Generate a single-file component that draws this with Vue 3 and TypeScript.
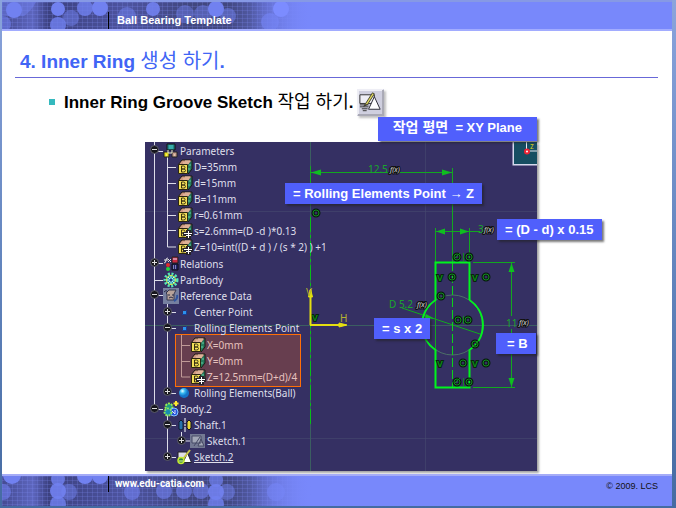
<script setup lang="ts">
interface Row {
  text: string
  icon: string
  level: number
  active?: boolean
}

const parameters: Row[] = [
  { text: 'Parameters', icon: 'params', level: 1 },
  { text: 'D=35mm', icon: 'value', level: 2 },
  { text: 'd=15mm', icon: 'value', level: 2 },
  { text: 'B=11mm', icon: 'value', level: 2 },
  { text: 'r=0.61mm', icon: 'value', level: 2 },
  { text: 's=2.6mm=(D -d )*0.13', icon: 'formula', level: 2 },
  { text: 'Z=10=int((D + d ) / (s * 2) ) +1', icon: 'formula', level: 2 },
]
const geometry: Row[] = [
  { text: 'Relations', icon: 'relations', level: 1 },
  { text: 'PartBody', icon: 'gear', level: 1 },
  { text: 'Reference Data', icon: 'refdata', level: 1 },
  { text: 'Center Point', icon: 'point', level: 2 },
  { text: 'Rolling Elements Point', icon: 'point', level: 2 },
]
const coordinates: Row[] = [
  { text: 'X=0mm', icon: 'value', level: 3 },
  { text: 'Y=0mm', icon: 'value', level: 3 },
  { text: 'Z=12.5mm=(D+d)/4', icon: 'formula', level: 3 },
]
const bodies: Row[] = [
  { text: 'Rolling Elements(Ball)', icon: 'ball', level: 2 },
  { text: 'Body.2', icon: 'body', level: 1 },
  { text: 'Shaft.1', icon: 'shaft', level: 2 },
  { text: 'Sketch.1', icon: 'hidden-sketch', level: 3 },
  { text: 'Sketch.2', icon: 'sketch', level: 2, active: true },
]
const groups = [
  { name: 'parameters', rows: parameters },
  { name: 'geometry', rows: geometry },
  { name: 'coordinates', rows: coordinates },
  { name: 'bodies', rows: bodies },
]

const toggles = [
  { x: 154, y: 149, open: true },
  { x: 154, y: 262, open: false },
  { x: 154, y: 294, open: true },
  { x: 167, y: 311, open: false },
  { x: 167, y: 327, open: true },
  { x: 167, y: 391, open: false },
  { x: 154, y: 408, open: true },
  { x: 167, y: 424, open: true },
  { x: 181, y: 440, open: false },
  { x: 167, y: 456, open: false },
]

const rings = [
  [316, 213], [452, 277], [486, 277], [441, 296], [458, 320], [468, 320],
  [475, 344], [463, 363], [486, 363], [457, 257], [469, 257], [457, 382], [469, 382],
]
const verticals = [[437, 281], [472, 281], [437, 367], [472, 367]]
const formulas = [[390, 172], [484, 232], [417, 307], [519, 325]]
</script>

<template>
  <div class="page">
    <svg class="defs" width="0" height="0" aria-hidden="true">
      <defs>
        <pattern id="mesh" width="5" height="4" patternUnits="userSpaceOnUse">
          <path d="M0 .5H5M.5 0V4" stroke="#7f8cf5" stroke-opacity=".22" />
        </pattern>
        <linearGradient id="fade">
          <stop offset="0" stop-color="#454b91" />
          <stop offset=".1" stop-color="#5d66be" />
          <stop offset=".15" stop-color="#3c4180" />
          <stop offset=".4" stop-color="#4d54a0" />
          <stop offset=".6" stop-color="#41477f" />
          <stop offset=".8" stop-color="#41477f" />
          <stop offset=".88" stop-color="#5b64bc" />
          <stop offset="1" stop-color="#7888fb" />
        </linearGradient>
        <linearGradient id="dissolve">
          <stop offset="0" stop-color="#7888fb" stop-opacity="0" />
          <stop offset="1" stop-color="#7888fb" />
        </linearGradient>
        <radialGradient id="sphere" cx=".35" cy=".3">
          <stop offset="0" stop-color="#e8ffff" />
          <stop offset=".5" stop-color="#35b8f0" />
          <stop offset="1" stop-color="#1474c8" />
        </radialGradient>
      </defs>
      <symbol id="i-params" viewBox="0 0 16 16">
        <path d="M4 1h8v6H4z" fill="#22888a" stroke="#111" />
        <path d="M6 3h4M6 5h4" stroke="#50d0c8" />
        <path d="M1 9h5v5H1z" fill="#e8e020" stroke="#222" />
        <path d="M9 9h5v5H9z" fill="#c8a090" stroke="#222" />
        <path d="M5 7v3h4V7M3 12h1M11 12h1" fill="none" stroke="#f0f0d0" />
      </symbol>
      <symbol id="i-value" viewBox="0 0 16 16">
        <path d="M1 6 5 1h10l-4 5z" fill="#d09a80" />
        <path d="M11 6l4-5v9l-4 5z" fill="#267c5e" />
        <path d="M1 6 5 1h10v9l-4 5" fill="none" stroke="#1a1814" />
        <path d="M6 4h6M8 2h5" stroke="#ecc7ae" />
        <path d="M13 5v2M12 9v2" stroke="#62c9a0" />
        <path d="M1.500 5.500h9v9h-9z" fill="#f3df58" stroke="#2b2610" />
        <path d="M4.500 7v6h2q2 0 2-1.500t-2-1.500h-2 2q1.500 0 1.500-1.500t-1.500-1.500z" fill="none" stroke="#3a3212" />
      </symbol>
      <symbol id="i-formula" viewBox="0 0 16 16">
        <use href="#i-value" />
        <path d="M6 9h3V7h5v2h2v4h-2v3H9v-3H6z" fill="#25222a" />
        <path d="M7 10.500h8M9 12.500h5M11.500 8v7" stroke="#fff" />
      </symbol>
      <symbol id="i-relations" viewBox="0 0 16 16">
        <path d="M1 7q2 0 2-3 0-2 2-2M1 4h4M5 6l3-3M5 3l3 3" fill="none" stroke="#ddd" />
        <circle cx="5" cy="9" r="2" fill="#e22a2a" />
        <circle cx="5" cy="13" r="2" fill="#22d040" />
        <path d="M9 1h6v6H9z" fill="#c82840" stroke="#222" />
        <path d="M9 8h6v6H9z" fill="#20226a" stroke="#111" />
        <path d="M10 3h4M10 10h1M12 10h1M10 12h1M12 12h1" stroke="#e0e0ff" />
      </symbol>
      <symbol id="i-gear" viewBox="0 0 16 16">
        <circle cx="8" cy="8" r="6" fill="none" stroke="#55e6b9" stroke-width="3" stroke-dasharray="2 1.500" />
        <circle cx="8" cy="8" r="4.500" fill="#209aae" stroke="#d8f044" />
        <path d="M8 4v8M4 8h8M5 5l6 6M11 5l-6 6" stroke="#b7f9ef" />
        <circle cx="8" cy="8" r="1.500" fill="#213a8b" />
      </symbol>
      <symbol id="i-refdata" viewBox="0 0 16 16">
        <path d="M0 0h16v16H0z" fill="#7680a0" />
        <path d="M3 5 6 2h7l-2 4v6H4V6z" fill="#b7a39a" stroke="#343850" />
        <path d="M5 7h2M9 7h2M6 10q2-2 4 0M1 4q2-3 4 0" fill="none" stroke="#262a45" />
        <path d="M11 13q4-2 3-6" fill="none" stroke="#3054a0" stroke-width="2" />
      </symbol>
      <symbol id="i-point" viewBox="0 0 16 16">
        <path d="M6 7h3v3H6z" fill="#2c91ed" />
        <path d="M9.500 6v4.500H5" fill="none" stroke="#183f98" />
      </symbol>
      <symbol id="i-ball" viewBox="0 0 16 16">
        <circle cx="7" cy="8" r="5" fill="url(#sphere)" />
      </symbol>
      <symbol id="i-body" viewBox="0 0 16 16">
        <circle cx="6" cy="6" r="3.500" fill="#1d9a88" stroke="#98ed4f" stroke-width="2" stroke-dasharray="2 1" />
        <circle cx="11" cy="11" r="4" fill="#2050d8" stroke="#87c8ff" />
        <circle cx="5" cy="11" r="3.500" fill="#1a8db0" stroke="#8be65a" stroke-width="2" stroke-dasharray="2 1" />
        <path d="M13 0v5M10.500 2.500h5" stroke="#ffea30" stroke-width="2" />
        <path d="M9 10l3 3M12 9v4" stroke="#ddf" />
      </symbol>
      <symbol id="i-shaft" viewBox="0 0 16 16">
        <path d="M2 5l2-2 2 2v7l-2 1-2-1z" fill="#2672ad" stroke="#0f1c30" />
        <path d="M10 5l2-2 2 2v6l-2 2-2-2z" fill="#e8d838" stroke="#15151f" />
        <path d="M8 1v14" stroke="#fff" stroke-dasharray="5 1 2 1" />
      </symbol>
      <symbol id="i-hidden-sketch" viewBox="0 0 16 16">
        <path d="M0 1h15v14H0z" fill="#737993" />
        <path d="M2 3h9v7H2zM8 13l3-7 3 7zM4 13 10 4" fill="#a2a7b7" stroke="#464a66" />
      </symbol>
      <symbol id="i-sketch" viewBox="0 0 16 16">
        <path d="M1 3h9v7H1z" fill="#dedee8" stroke="#222" />
        <path d="M6 13.500 10.500 4l4 9.500z" fill="#fff" stroke="#202030" />
        <path d="M6 10 13 1" stroke="#c9c848" stroke-width="2" />
        <circle cx="4" cy="11.500" r="3" fill="#31803a" stroke="#c4ec31" stroke-width="1.500" />
        <path d="M2 12h4" stroke="#e9ff91" />
      </symbol>
    </svg>

    <header class="band top">
      <svg class="pattern" viewBox="0 0 310 28" preserveAspectRatio="xMinYMin slice" aria-hidden="true">
        <path d="M0 0h310v28H0z" fill="url(#fade)" />
        <path d="M0 0h310v28H0z" fill="url(#mesh)" />
        <g fill="#7181f0">
          <path d="M0 0h34q-4 8-12 14H0z" opacity=".5" />
          <circle cx="12" cy="8" r="8" /><circle cx="1" cy="22" r="8" opacity=".6" />
          <circle cx="56" cy="7" r="7" /><circle cx="56" cy="23" r="8" opacity=".8" />
          <circle cx="69" cy="16" r="8" opacity=".5" /><circle cx="83" cy="6" r="8" opacity=".8" />
          <circle cx="98" cy="6" r="8" /><circle cx="125" cy="14" r="9" opacity=".5" />
          <circle cx="151" cy="7" r="7" opacity=".9" /><circle cx="183" cy="12" r="9" opacity=".45" />
          <circle cx="201" cy="12" r="9" opacity=".45" /><circle cx="214" cy="7" r="8" />
          <circle cx="226" cy="14" r="8" opacity=".5" /><circle cx="268" cy="20" r="9" opacity=".6" />
        </g>
        <path d="M225 0h85v28h-85z" fill="url(#dissolve)" />
        <circle cx="279" cy="7" r="8" fill="#7c8cff" />
      </svg>
      <span class="band-text">Ball Bearing Template</span>
    </header>

    <main>
      <h1>4. Inner Ring <span>생성 하기</span>.</h1>
      <h2>
        <i class="bullet"></i>
        <span>Inner Ring Groove Sketch <span class="ko">작업 하기</span>.</span>
        <svg class="tool" viewBox="0 0 28 28" aria-hidden="true">
          <path d="M0 0h28v28H0z" fill="#cfcfdf" />
          <path d="M1 27V1h26" fill="none" stroke="#eeeef5" stroke-width="2" />
          <path d="M27 1v26H1" fill="none" stroke="#a9a9b5" stroke-width="2" />
          <path d="M3 6h15v9H3z" fill="#eeeef5" stroke="#333" />
          <path d="M18 8l6 13H12z" fill="#fff" stroke="#2c2c35" />
          <path d="M9 15 16 4l2 1-7 11-4 2z" fill="#e0d85b" stroke="#444432" />
          <path d="M3 16.500h9M3 18.500h9M5 20.500h6M6 22.500h4" stroke="#333" />
        </svg>
      </h2>

      <section class="model">
        <svg class="canvas" viewBox="145 142 392 329">
          <g fill="none" stroke="#464970">
            <path d="M425.500 142V471M145 211.500H537M145 438.500H537" opacity=".6" />
            <path d="M310.500 142V471M145 325.500H537" stroke="#3b5e61" />
          </g>
          <g class="links">
            <path d="M154.500 142V409M154 151.500h9M154 263.500h9M154 280.500h9M154 295.500h9M154 409.500h9" />
            <path d="M167.500 157V247H176M168 167.500h8M168 183.500h8M168 199.500h8M168 215.500h8M168 230.500h8" />
            <path d="M167.500 302V393M168 312.500h8M168 328.500h8M168 393.500h8M181.500 334V377H190M181 345.500h9M181 361.500h9" />
            <path d="M167.500 415V457M168 425.500h8M168 457.500h8M181.500 432v9h9" />
          </g>
          <g v-for="t in toggles" :key="`${t.x}-${t.y}`">
            <circle :cx="t.x + 0.5" :cy="t.y + 0.5" r="4" fill="#16161c" stroke="#5d5d6c" />
            <path :d="`M${t.x - 2} ${t.y + 0.5}h5`" stroke="#ddd" />
            <path v-if="!t.open" :d="`M${t.x + 0.5} ${t.y - 2}v5`" stroke="#ddd" />
          </g>

          <g fill="none" stroke="#12a820">
            <path d="M310.500 166V205M310.500 172.500H452.500M452.500 168V262" />
            <path d="M310.500 217V425" stroke-dasharray="15 3 3 3" stroke="#08be18" />
            <path d="M435.500 228V262M469.500 228V262M435 231.500H480M473 262.500H515M473 387.500H515M511.500 262V316M511.500 329V387" />
            <path d="M435.500 301V349M402 308 480 334" />
            <circle cx="452.500" cy="325" r="30" stroke="#4c6f67" />
            <path d="M452.500 262V387" stroke-dasharray="9 3" stroke="#0bd41a" />
            <path d="M469.500 300V262.500H435.500V300A30 30 0 0 0 435.500 350V387.500H469.500V350A30 30 0 0 0 469.500 300" stroke="#00f51d" stroke-width="2" />
          </g>
          <g fill="#0fbe20">
            <path d="M311 172.500l10-3v6zM452 172.500l-10-3v6zM436 231.500l9-3v6zM469 231.500l-9-3v6zM511.500 263l-3 9h6zM511.500 387l-3-9h6zM435 319l-9-5-1 4z" />
          </g>
          <g class="dims">
            <text x="368" y="173">12.5</text>
            <text x="478" y="233">3</text>
            <text x="389" y="308">D 5.2</text>
            <text x="506" y="327">11</text>
          </g>
          <g fill="none" stroke="#071b0d" stroke-width="3">
            <circle v-for="r in rings" :key="r.join()" :cx="r[0]" :cy="r[1]" r="3" />
          </g>
          <g fill="none" stroke="#138b20">
            <circle v-for="r in rings" :key="r.join()" :cx="r[0]" :cy="r[1]" r="3" />
            <path d="M463.500 253v8M463.500 316v8M463.500 378v8M454 259l6-6M454 384l6-6M472 347l6-6" />
          </g>
          <g class="marks">
            <text v-for="v in verticals" :key="v.join()" :x="v[0]" :y="v[1]">V</text>
            <text x="312" y="321">V</text>
          </g>
          <g class="fx">
            <text v-for="f in formulas" :key="f.join()" :x="f[0]" :y="f[1]">f(x)</text>
          </g>
          <g stroke="#e4df10" fill="#e4df10">
            <path d="M310.500 290V325M310 325H346" stroke-width="2" />
            <path d="M310.500 289l-2 8h4zM347 325l-8-2v4z" />
          </g>
          <g class="axis">
            <text x="306" y="296">V</text>
            <text x="340" y="322">H</text>
          </g>
          <path d="M513.500 142V164.500H537" fill="none" stroke="#d6d8ed" stroke-width="2" />
          <path d="M514 142h23v22h-23z" fill="#164e62" />
          <path d="M526.500 142v9H537" fill="none" stroke="#e8e8f2" />
          <circle cx="527" cy="151.500" r="2" fill="#fff" stroke="#ee2434" stroke-width="2" />
          <text class="compass" x="530" y="149">z</text>
        </svg>

        <div class="tree">
          <ul v-for="g in groups" :key="g.name" :class="g.name">
            <li v-for="row in g.rows" :key="row.text" :class="['level-' + row.level, { active: row.active }]">
              <svg class="icon" viewBox="0 0 16 16" aria-hidden="true"><use :href="'#i-' + row.icon" /></svg>
              <span>{{ row.text }}</span>
            </li>
          </ul>
        </div>

        <p class="note plane"><span>작업 평면</span>&nbsp; = XY Plane</p>
        <p class="note distance">= Rolling Elements Point → Z</p>
        <p class="note width">= (D - d) x 0.15</p>
        <p class="note diameter">= s x 2</p>
        <p class="note height">= B</p>
      </section>
    </main>

    <footer class="band bottom">
      <svg class="pattern" viewBox="0 0 310 30" preserveAspectRatio="xMinYMin slice" aria-hidden="true">
        <path d="M0 0h310v30H0z" fill="url(#fade)" />
        <path d="M0 0h310v30H0z" fill="url(#mesh)" />
        <g fill="#7181f0">
          <circle cx="10" cy="-1" r="9" /><circle cx="1" cy="16" r="8" opacity=".6" />
          <circle cx="56" cy="3" r="7" opacity=".8" /><circle cx="56" cy="15" r="8" opacity=".9" />
          <circle cx="56" cy="28" r="8" opacity=".8" /><circle cx="67" cy="16" r="8" opacity=".5" />
          <circle cx="83" cy="0" r="8" /><circle cx="98" cy="0" r="8" />
          <circle cx="130" cy="16" r="8" opacity=".6" /><circle cx="162" cy="15" r="8" opacity=".6" />
          <circle cx="182" cy="15" r="8" opacity=".6" /><circle cx="199" cy="15" r="8" opacity=".6" />
          <circle cx="214" cy="4" r="7" opacity=".7" /><circle cx="214" cy="16" r="8" opacity=".9" />
          <circle cx="214" cy="28" r="8" opacity=".8" /><circle cx="225" cy="16" r="8" opacity=".5" />
          <circle cx="274" cy="16" r="9" opacity=".6" />
        </g>
        <path d="M225 0h85v30h-85z" fill="url(#dissolve)" />
      </svg>
      <span class="band-text">www.edu-catia.com</span>
      <small>© 2009. LCS</small>
    </footer>
  </div>
</template>

<style>
body {
  margin: 0;
}
</style>

<style scoped>
.page {
  box-sizing: border-box;
  display: flex;
  flex-direction: column;
  min-height: 100vh;
  padding: 0 4px 2px 2px;
  background: linear-gradient(#8ba4dc, #6486bf 50%, #456ba2);
  font-family: "Liberation Sans", "Noto Sans CJK KR", sans-serif;
}
.defs {
  position: absolute;
}
.band {
  position: relative;
  box-sizing: border-box;
  display: flex;
  justify-content: space-between;
  background: #7888fb;
  color: #fff;
  font-weight: bold;
}
.top {
  height: 31px;
  border-top: 2px solid #8699e5;
  border-bottom: 2px solid #a2acff;
  font-size: 11px;
}
.bottom {
  height: 32px;
  border-top: 2px solid #a5acf7;
  font-size: 10px;
}
.pattern {
  position: absolute;
  top: 0;
  left: 0;
  width: 310px;
  height: 100%;
}
.band-text {
  position: relative;
  margin-left: 106px;
  border-left: 1px solid #000;
}
.top .band-text {
  margin-top: 10px;
  padding-left: 8px;
  line-height: 16px;
}
.bottom .band-text {
  margin-bottom: 14px;
  padding-left: 6px;
  font-family: Roboto, sans-serif;
  line-height: 15px;
}
small {
  padding-right: 14px;
  color: #111;
  font-size: 9px;
  font-weight: normal;
  line-height: 20px;
}
main {
  flex: 1;
  padding-bottom: 3px;
  background: #fff;
}
h1 {
  height: 28px;
  margin: 16px 14px 0 13px;
  padding: 0 0 2px 5px;
  border-bottom: 1px solid #6868d8;
  color: #4165f5;
  font-size: 19px;
  line-height: 28px;
}
h1 span,
.ko {
  font-weight: normal;
}
h1 span {
  font-size: 20px;
}
h2 {
  display: flex;
  align-items: center;
  height: 28px;
  margin: 10px 0 0 47px;
  color: #000;
  font-size: 17px;
  line-height: 28px;
}
.ko {
  font-size: 18px;
}
.bullet {
  width: 6px;
  height: 6px;
  margin-right: 9px;
  background: #35b9be;
}
.tool {
  width: 27px;
  height: 27px;
  margin-left: 4px;
  box-shadow: 2px 2px 2px #8888;
}
.model {
  position: relative;
  left: 4px;
  width: 392px;
  margin: 26px auto 0;
  background: #353063;
  box-shadow: 2px 2px 2px #777a;
}
.canvas {
  position: absolute;
  top: 0;
  left: 0;
  width: 392px;
  height: 329px;
}
.links {
  fill: none;
  stroke: #dcdce8;
}
text {
  font-family: "Noto Sans", sans-serif;
}
.dims {
  fill: #19a82b;
  font-size: 10px;
}
.marks {
  fill: #0c8518;
  stroke: #09210d;
  stroke-width: 2px;
  paint-order: stroke;
  font-size: 9px;
  font-weight: bold;
}
.fx {
  fill: #ddd;
  stroke: #111;
  stroke-width: 2px;
  paint-order: stroke;
  font-size: 7px;
  font-style: italic;
}
.axis {
  fill: #b5b330;
  font-size: 10px;
}
.compass {
  fill: #d8d020;
  font-size: 8px;
}
.tree {
  position: relative;
  padding: 1px 0 6px;
  color: #dfdfeb;
  font: 10px/16px "Noto Sans", sans-serif;
}
ul {
  margin: 0;
  padding: 0;
  list-style: none;
}
li {
  display: flex;
  gap: 1px;
  height: 16px;
  white-space: pre;
}
.icon {
  width: 16px;
  height: 16px;
}
.level-1 {
  padding-left: 18px;
}
.level-2 {
  padding-left: 32px;
}
.level-3 {
  padding-left: 45px;
}
.active span {
  text-decoration: underline;
}
.geometry {
  margin-top: 1px;
}
.coordinates {
  box-sizing: border-box;
  width: 126px;
  margin: -2px 0 -2px 30px;
  padding: 2px 0 1px;
  border: 1px solid #ff6f08;
  background: #a0503a77;
  color: #e6c1bd;
}
.coordinates .level-3 {
  padding-left: 14px;
}
.note {
  position: absolute;
  margin: 0;
  padding: 0 8px;
  background: #505ffc;
  box-shadow: 2px 2px 2px #2229;
  color: #fff;
  font-size: 13px;
  font-weight: bold;
  line-height: 21px;
  white-space: nowrap;
}
.plane {
  top: -25px;
  right: 0;
  height: 24px;
  padding: 0 15px;
}
.plane span {
  font-size: 14px;
}
.distance {
  top: 41px;
  left: 140px;
}
.width {
  top: 77px;
  left: 352px;
}
.diameter {
  top: 176px;
  left: 229px;
}
.height {
  top: 191px;
  left: 351px;
  padding-left: 11px;
}
</style>
